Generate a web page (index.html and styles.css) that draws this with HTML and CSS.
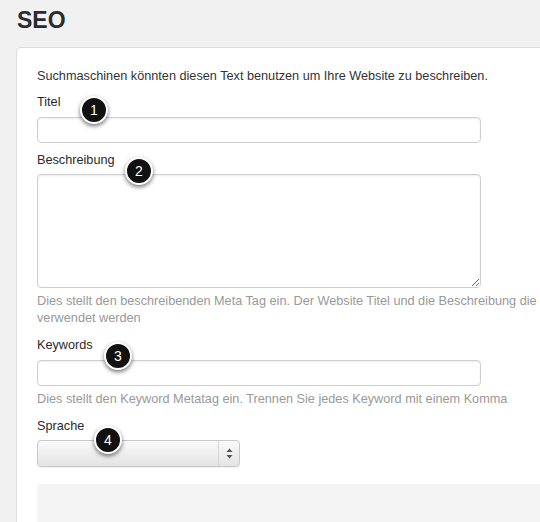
FILE: index.html
```html
<!DOCTYPE html>
<html lang="de">
<head>
    <meta charset="UTF-8">
    <meta name="viewport" content="width=device-width, initial-scale=1.0">
    <title>SEO</title>
    <link rel="stylesheet" href="styles.css">
</head>
<body>
    <h1 class="page-title">SEO</h1>

    <div class="card">
        <p class="intro">Suchmaschinen könnten diesen Text benutzen um Ihre Website zu beschreiben.</p>

        <div class="field field-title">
            <label for="title">Titel</label>
            <input type="text" id="title" class="text-input">
            <span class="step step-1">1</span>
        </div>

        <div class="field field-desc">
            <label for="desc">Beschreibung</label>
            <textarea id="desc" class="text-area"></textarea>
            <p class="help"><span class="nowrap">Dies stellt den beschreibenden Meta Tag ein. Der Website Titel und die Beschreibung die hier eingegeben wird, kann von Suchmaschinen</span><br>verwendet werden</p>
            <span class="step step-2">2</span>
        </div>

        <div class="field field-keys">
            <label for="keys">Keywords</label>
            <input type="text" id="keys" class="text-input">
            <p class="help">Dies stellt den Keyword Metatag ein. Trennen Sie jedes Keyword mit einem Komma</p>
            <span class="step step-3">3</span>
        </div>

        <div class="field field-lang">
            <label>Sprache</label>
            <div class="select">
                <div class="select-value"></div>
                <div class="select-arrows">
                    <svg width="7" height="11" viewBox="0 0 7 11">
                        <path d="M3.5 0.5 L6.5 4 L0.5 4 Z" fill="#555"/>
                        <path d="M3.5 10.5 L6.5 7 L0.5 7 Z" fill="#555"/>
                    </svg>
                </div>
            </div>
            <span class="step step-4">4</span>
        </div>

        <div class="panel"></div>
    </div>
</body>
</html>
```

FILE: styles.css
```css
html, body { margin: 0; height: 100%; }
body {
    background: #f1f1f1;
    font-family: "Liberation Sans", Arial, sans-serif;
    font-size: 12.7px;
    color: #333;
    overflow: hidden;
}

.page-title {
    margin: 0;
    padding: 7px 0 0 17px;
    height: 47px;
    box-sizing: border-box;
    font-size: 23px;
    line-height: 26px;
    font-weight: bold;
    color: #2b2b2b;
}

.card {
    margin-left: 16px;
    width: 800px;
    min-height: 500px;
    box-sizing: border-box;
    padding: 19px 0 0 20px;
    background: #fff;
    border: 1px solid #dcdcdc;
    border-right: none;
    border-radius: 5px 0 0 0;
}

.intro { margin: 0 0 8px; line-height: 18px; }

.field { position: relative; }
.field label { display: block; line-height: 18px; margin-bottom: 6px; color: #2a2a2a; }
.field-desc label, .field-lang label { margin-bottom: 5px; }
.field-desc { margin-top: 8px; }
.field-keys, .field-lang { margin-top: 9px; }

.text-input, .text-area {
    display: block;
    width: 444px;
    box-sizing: border-box;
    margin: 0;
    border: 1px solid #cfcfcf;
    border-radius: 4px;
    background: #fff;
    box-shadow: inset 0 1px 2px rgba(0, 0, 0, 0.08);
    font: inherit;
}
.text-input { height: 26px; }
.text-area { height: 114px; resize: vertical; }

.help {
    margin: 5px 0 0;
    width: 800px;
    line-height: 17px;
    color: #999;
}
.nowrap { white-space: nowrap; }

.select {
    display: flex;
    width: 203px;
    height: 27px;
    box-sizing: border-box;
    border: 1px solid #c8c8c8;
    border-radius: 4px;
    background: linear-gradient(to bottom, #fafafa, #e4e4e4);
    box-shadow: 0 1px 1px rgba(0, 0, 0, 0.06);
}
.select-value { flex: 1; }
.select-arrows {
    width: 20px;
    border-left: 1px solid #d6d6d6;
    display: flex;
    align-items: center;
    justify-content: center;
}

.panel {
    margin-top: 17px;
    height: 60px;
    background: #f4f4f4;
    border-radius: 4px 0 0 0;
}

/* numbered callouts over the form */
.step {
    position: absolute;
    width: 24px;
    height: 24px;
    margin: -14px 0 0 -14px;
    border: 2px solid #fff;
    border-radius: 50%;
    background: #111;
    color: #fff;
    font-size: 14px;
    line-height: 24px;
    text-align: center;
    box-shadow: 0 2px 4px rgba(0, 0, 0, 0.55);
}
.step-1 { left: 57px; top: 17px; }
.step-2 { left: 102px; top: 20px; }
.step-3 { left: 81px; top: 20px; }
.step-4 { left: 71px; top: 23px; }
```
